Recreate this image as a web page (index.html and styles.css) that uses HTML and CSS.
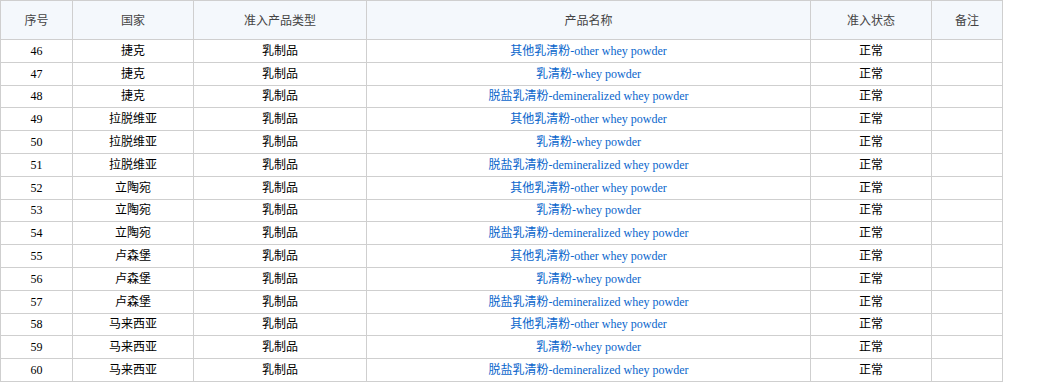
FILE: index.html
```html
<!DOCTYPE html>
<html lang="zh">
<head>
<meta charset="utf-8">
<link rel="stylesheet" href="styles.css">
</head>
<body>
<table class="grid">
  <colgroup>
    <col class="c-no"><col class="c-country"><col class="c-type"><col class="c-name"><col class="c-state"><col class="c-note">
  </colgroup>
  <thead>
    <tr><th>序号</th><th>国家</th><th>准入产品类型</th><th>产品名称</th><th>准入状态</th><th>备注</th></tr>
  </thead>
  <tbody>
    <tr><td>46</td><td>捷克</td><td>乳制品</td><td><a>其他乳清粉-other whey powder</a></td><td>正常</td><td></td></tr>
    <tr><td>47</td><td>捷克</td><td>乳制品</td><td><a>乳清粉-whey powder</a></td><td>正常</td><td></td></tr>
    <tr><td>48</td><td>捷克</td><td>乳制品</td><td><a>脱盐乳清粉-demineralized whey powder</a></td><td>正常</td><td></td></tr>
    <tr><td>49</td><td>拉脱维亚</td><td>乳制品</td><td><a>其他乳清粉-other whey powder</a></td><td>正常</td><td></td></tr>
    <tr><td>50</td><td>拉脱维亚</td><td>乳制品</td><td><a>乳清粉-whey powder</a></td><td>正常</td><td></td></tr>
    <tr><td>51</td><td>拉脱维亚</td><td>乳制品</td><td><a>脱盐乳清粉-demineralized whey powder</a></td><td>正常</td><td></td></tr>
    <tr><td>52</td><td>立陶宛</td><td>乳制品</td><td><a>其他乳清粉-other whey powder</a></td><td>正常</td><td></td></tr>
    <tr><td>53</td><td>立陶宛</td><td>乳制品</td><td><a>乳清粉-whey powder</a></td><td>正常</td><td></td></tr>
    <tr><td>54</td><td>立陶宛</td><td>乳制品</td><td><a>脱盐乳清粉-demineralized whey powder</a></td><td>正常</td><td></td></tr>
    <tr><td>55</td><td>卢森堡</td><td>乳制品</td><td><a>其他乳清粉-other whey powder</a></td><td>正常</td><td></td></tr>
    <tr><td>56</td><td>卢森堡</td><td>乳制品</td><td><a>乳清粉-whey powder</a></td><td>正常</td><td></td></tr>
    <tr><td>57</td><td>卢森堡</td><td>乳制品</td><td><a>脱盐乳清粉-demineralized whey powder</a></td><td>正常</td><td></td></tr>
    <tr><td>58</td><td>马来西亚</td><td>乳制品</td><td><a>其他乳清粉-other whey powder</a></td><td>正常</td><td></td></tr>
    <tr><td>59</td><td>马来西亚</td><td>乳制品</td><td><a>乳清粉-whey powder</a></td><td>正常</td><td></td></tr>
    <tr><td>60</td><td>马来西亚</td><td>乳制品</td><td><a>脱盐乳清粉-demineralized whey powder</a></td><td>正常</td><td></td></tr>
  </tbody>
</table>
</body>
</html>
```

FILE: styles.css
```css
html, body {
  margin: 0;
  padding: 0;
  background: #fff;
}

.grid {
  border-collapse: collapse;
  table-layout: fixed;
  width: 1002px;
  font-family: "Liberation Serif", "Noto Sans CJK SC", serif;
  font-size: 12px;
  color: #000;
}

.c-no { width: 72px; }
.c-country { width: 121px; }
.c-type { width: 173px; }
.c-name { width: 444px; }
.c-state { width: 121px; }
.c-note { width: 71px; }

.grid th,
.grid td {
  border: 1px solid #cfcfcf;
  text-align: center;
  padding: 0;
  line-height: 16px;
}

.grid th {
  height: 38px;
  background: #f4f8fc;
  font-family: "Noto Sans CJK SC", sans-serif;
  font-weight: normal;
  color: #444;
}

.grid tbody tr {
  height: 22.8px;
}

.grid a {
  color: #0a66cc;
  text-decoration: none;
}
```
